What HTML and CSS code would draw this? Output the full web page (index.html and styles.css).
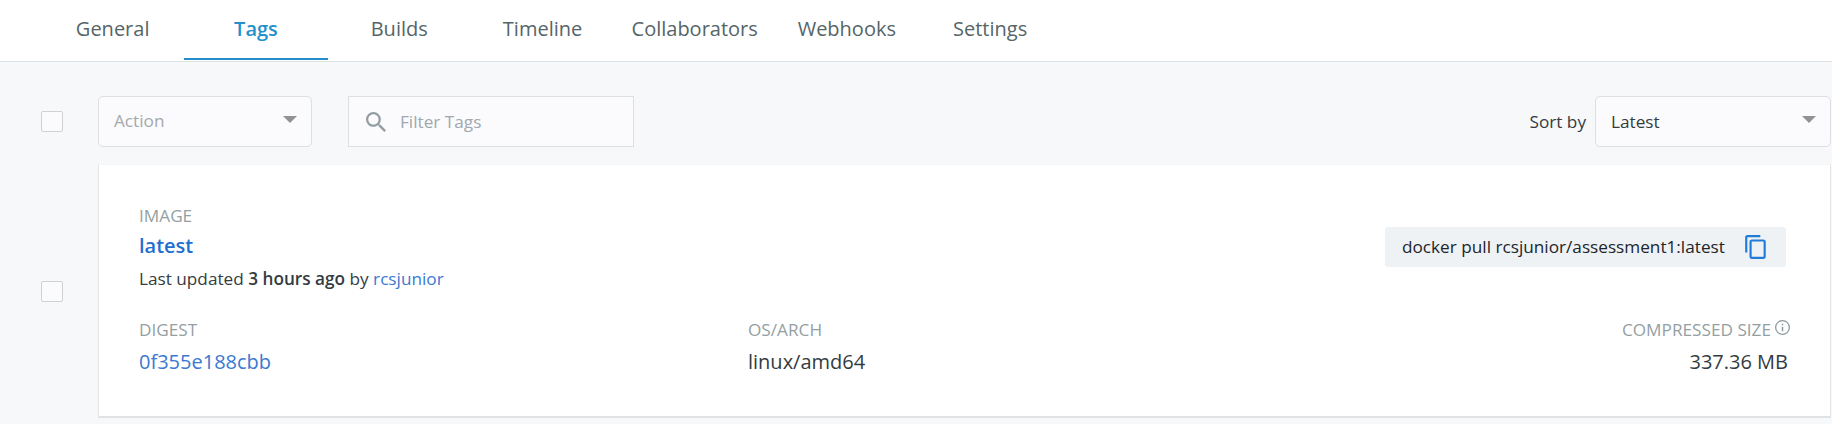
FILE: index.html
```html
<!DOCTYPE html>
<html lang="en">
<head>
<meta charset="utf-8">
<title>Tags</title>
<link rel="stylesheet" href="styles.css">
</head>
<body>
<nav class="tabs">
  <a class="tab">General</a>
  <a class="tab active">Tags</a>
  <a class="tab">Builds</a>
  <a class="tab">Timeline</a>
  <a class="tab wide">Collaborators</a>
  <a class="tab">Webhooks</a>
  <a class="tab">Settings</a>
</nav>
<main class="content">
  <div class="toolbar">
    <span class="checkbox"></span>
    <div class="select action"><span>Action</span><span class="caret"></span></div>
    <div class="search">
      <svg class="search-icon" viewBox="3 3 17.5 17.5"><path d="M15.5 14h-.79l-.28-.27A6.471 6.471 0 0 0 16 9.500 6.500 6.500 0 1 0 9.500 16c1.610 0 3.090-.59 4.230-1.570l.27.28v.79l5 4.990L20.490 19l-4.990-5zm-6 0C7.010 14 5 11.990 5 9.500S7.010 5 9.500 5 14 7.010 14 9.500 11.990 14 9.500 14z"/></svg>
      <span>Filter Tags</span>
    </div>
    <span class="sort-label">Sort by</span>
    <div class="select sort"><span>Latest</span><span class="caret"></span></div>
  </div>
  <div class="row">
    <span class="checkbox"></span>
    <section class="card">
      <div class="top">
        <div class="image">
          <div class="label">IMAGE</div>
          <div class="name">latest</div>
          <div class="updated">Last updated <b>3 hours ago</b> by <a>rcsjunior</a></div>
        </div>
        <div class="pull">
          <span class="command">docker pull rcsjunior/assessment1:latest</span>
          <svg class="copy" viewBox="0 0 24 24"><path d="M16 1H4c-1.100 0-2 .9-2 2v14h2V3h12V1zm3 4H8c-1.100 0-2 .9-2 2v14c0 1.100.9 2 2 2h11c1.100 0 2-.9 2-2V7c0-1.100-.9-2-2-2zm0 16H8V7h11v14z"/></svg>
        </div>
      </div>
      <div class="details">
        <div><div class="label">DIGEST</div><div class="value link">0f355e188cbb</div></div>
        <div><div class="label">OS/ARCH</div><div class="value">linux/amd64</div></div>
        <div class="size">
          <div class="label">COMPRESSED SIZE<svg class="info" viewBox="2 2 20 20"><path d="M11 17h2v-6h-2v6zm1-15a10 10 0 1 0 0 20 10 10 0 0 0 0-20zm0 18.300a8.300 8.300 0 1 1 0-16.600 8.300 8.300 0 0 1 0 16.600zM11 9h2V7h-2v2z"/></svg></div>
          <div class="value">337.36 MB</div>
        </div>
      </div>
    </section>
  </div>
</main>
</body>
</html>
```
FILE: styles.css
```css
* { box-sizing: border-box; }
body {
  margin: 0;
  height: 424px;
  overflow: hidden;
  background: #f7f8fa;
  color: #343c42;
  font: 17.2px/24px "Open Sans", sans-serif;
}
.tabs {
  display: flex;
  height: 62px;
  padding-left: 41px;
  background: #fff;
  border-bottom: 1px solid #dfe2e4;
}
.tab {
  flex: none;
  width: 143.3px;
  height: 60px;
  line-height: 57px;
  font-size: 20px;
  text-align: center;
  color: #556568;
  white-space: nowrap;
}
.tab.wide { width: 161px; }
.tab.active {
  color: #2490cb;
  font-weight: 600;
  border-bottom: 2px solid #2490cb;
}
.toolbar {
  display: flex;
  align-items: center;
  height: 51px;
  margin-top: 34px;
  padding-left: 41px;
}
.checkbox {
  flex: none;
  width: 22px;
  height: 21px;
  border: 1px solid #cfd2d5;
  border-radius: 2px;
  background: #fbfbfd;
}
.select {
  display: flex;
  align-items: center;
  justify-content: space-between;
  height: 51px;
  border: 1px solid #dddfe2;
  border-radius: 5px;
  padding: 0 14px 2px 15px;
  background: #fbfbfd;
}
.action {
  width: 214px;
  margin-left: 35px;
  color: #a5a9ad;
}
.caret {
  margin-top: -3px;
  border: 7px solid transparent;
  border-top-color: #929294;
  border-bottom: 0;
}
.search {
  display: flex;
  align-items: center;
  width: 286px;
  height: 51px;
  margin-left: 36px;
  padding-left: 17px;
  border: 1px solid #dddfe2;
  background: #fbfbfd;
  color: #a0a8ae;
}
.search-icon {
  width: 20px;
  height: 20px;
  margin-right: 14px;
  fill: #929ca4;
}
.sort-label { margin-left: auto; margin-right: 9px; }
.sort {
  width: 236px;
  margin-right: 1px;
  padding-bottom: 0;
}
.sort .caret { margin-top: -5px; }
.row {
  display: flex;
  align-items: center;
  margin-top: 17px;
  padding-left: 41px;
}
.card {
  flex: none;
  width: 1733px;
  height: 254px;
  margin-left: 35px;
  padding: 39px 41px 0 40px;
  background: #fff;
  border: 1px solid #e3e6e8;
  border-top-color: #f4f5f6;
  border-bottom: 2px solid #e0e3e6;
}
.top {
  display: flex;
  justify-content: space-between;
  height: 114px;
}
.label { color: #949fa3; }
.name {
  font-size: 20px;
  line-height: 30px;
  margin-top: 3px;
  font-weight: 600;
  color: #1f70d0;
}
.updated { margin-top: 6px; }
.updated a, .link { color: #3b79d0; }
b { font-weight: 600; }
.pull {
  display: flex;
  align-items: center;
  justify-content: space-between;
  width: 401px;
  height: 40px;
  margin: 23px 3px 0 0;
  padding: 0 17px;
  border-radius: 3px;
  background: #eff2f5;
  color: #202529;
}
.copy { width: 26px; height: 26px; fill: #1f7cdb; }
.details {
  display: grid;
  grid-template-columns: 609px 500px 1fr;
}
.value {
  font-size: 20px;
  line-height: 30px;
  margin-top: 5px;
}
.value.link { color: #3b79d0; }
.size { text-align: right; }
.size .value { margin-right: 1px; }
.info { width: 15px; height: 15px; margin-left: 4px; margin-right: -1px; fill: #8f9a9f; vertical-align: 1px; }
```
